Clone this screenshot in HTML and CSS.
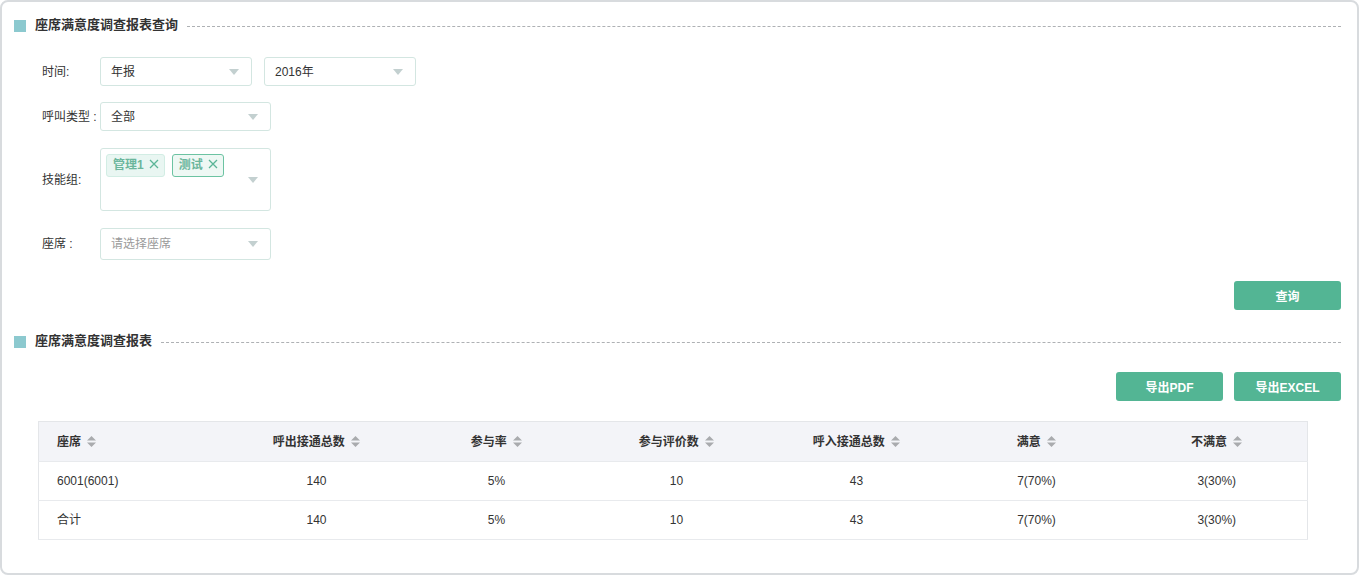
FILE: index.html
```html
<!DOCTYPE html>
<html lang="zh-CN">
<head>
  <meta charset="UTF-8" />
  <title>座席满意度调查报表查询</title>
  <link rel="stylesheet" href="styles.css">
</head>
<body>

<div class="panel">
  <div class="sec-title">
    <span class="mark"></span>
    <span class="sec-text">座席满意度调查报表查询</span>
    <span class="dash"></span>
  </div>

  <div class="form">
    <div class="row first">
      <span class="label">时间:</span>
      <div class="select w152"><span>年报</span><i class="caret"></i></div>
      <div class="select w152 ml12"><span class="num">2016年</span><i class="caret"></i></div>
    </div>
    <div class="row">
      <span class="label">呼叫类型 :</span>
      <div class="select w171"><span>全部</span><i class="caret"></i></div>
    </div>
    <div class="row">
      <span class="label">技能组:</span>
      <div class="multi w171">
        <div class="tags">
          <span class="tag">管理1
            <svg width="10" height="10" viewBox="0 0 10 10"><path d="M1 1L9 9M9 1L1 9" stroke="#5bb597" stroke-width="1.3"/></svg>
          </span>
          <span class="tag active">测试
            <svg width="10" height="10" viewBox="0 0 10 10"><path d="M1 1L9 9M9 1L1 9" stroke="#5bb597" stroke-width="1.3"/></svg>
          </span>
        </div>
        <i class="caret"></i>
      </div>
    </div>
    <div class="row last">
      <span class="label">座席 :</span>
      <div class="select w171 tall"><span class="placeholder">请选择座席</span><i class="caret"></i></div>
    </div>
  </div>

  <div class="actions first">
    <button class="btn">查询</button>
  </div>

  <div class="sec-title second">
    <span class="mark"></span>
    <span class="sec-text">座席满意度调查报表</span>
    <span class="dash"></span>
  </div>

  <div class="actions export">
    <button class="btn">导出PDF</button>
    <button class="btn">导出EXCEL</button>
  </div>

  <table class="report">
    <colgroup>
      <col style="width:188px">
      <col style="width:180px"><col style="width:180px"><col style="width:180px">
      <col style="width:180px"><col style="width:180px"><col style="width:181px">
    </colgroup>
    <thead>
      <tr>
        <th class="left">座席 <svg class="sort" width="9" height="11" viewBox="0 0 9 11"><path d="M4.5 0L9 4.5H0Z M4.5 11L0 6.5H9Z" fill="#a9abae"/></svg></th>
        <th>呼出接通总数 <svg class="sort" width="9" height="11" viewBox="0 0 9 11"><path d="M4.5 0L9 4.5H0Z M4.5 11L0 6.5H9Z" fill="#a9abae"/></svg></th>
        <th>参与率 <svg class="sort" width="9" height="11" viewBox="0 0 9 11"><path d="M4.5 0L9 4.5H0Z M4.5 11L0 6.5H9Z" fill="#a9abae"/></svg></th>
        <th>参与评价数 <svg class="sort" width="9" height="11" viewBox="0 0 9 11"><path d="M4.5 0L9 4.5H0Z M4.5 11L0 6.5H9Z" fill="#a9abae"/></svg></th>
        <th>呼入接通总数 <svg class="sort" width="9" height="11" viewBox="0 0 9 11"><path d="M4.5 0L9 4.5H0Z M4.5 11L0 6.5H9Z" fill="#a9abae"/></svg></th>
        <th>满意 <svg class="sort" width="9" height="11" viewBox="0 0 9 11"><path d="M4.5 0L9 4.5H0Z M4.5 11L0 6.5H9Z" fill="#a9abae"/></svg></th>
        <th>不满意 <svg class="sort" width="9" height="11" viewBox="0 0 9 11"><path d="M4.5 0L9 4.5H0Z M4.5 11L0 6.5H9Z" fill="#a9abae"/></svg></th>
      </tr>
    </thead>
    <tbody>
      <tr>
        <td class="left">6001(6001)</td>
        <td>140</td><td>5%</td><td>10</td><td>43</td><td>7(70%)</td><td>3(30%)</td>
      </tr>
      <tr>
        <td class="left">合计</td>
        <td>140</td><td>5%</td><td>10</td><td>43</td><td>7(70%)</td><td>3(30%)</td>
      </tr>
    </tbody>
  </table>
</div>

</body>
</html>
```

FILE: styles.css
```css
/* 基本 */
body {
  margin: 0;
  font-family: "Liberation Sans", "Noto Sans CJK SC", sans-serif;
  font-size: 12px;
  line-height: 16px;
  color: #333;
  background: #fff;
}

.panel {
  box-sizing: border-box;
  width: 1359px;
  height: 575px;
  border: 2px solid #d8dbde;
  border-radius: 8px;
  padding: 12px 16px 0 12px;
}

/* 标题 */
.sec-title {
  display: flex;
  align-items: center;
  height: 24px;
}

.sec-title.second {
  margin-top: 20px;
}

.mark {
  width: 12px;
  height: 12px;
  background: #8cc9cf;
}

.sec-text {
  margin-left: 9px;
  margin-top: -2px;
  font-size: 13px;
  font-weight: bold;
  color: #333;
}

.dash {
  flex: 1;
  margin-left: 9px;
  border-top: 1px dashed #aeb1b4;
}

/* 查询表单 */
.form {
  margin-top: 19px;
  padding-left: 28px;
}

.row {
  display: flex;
  align-items: center;
  margin-bottom: 17px;
}

.row.first {
  margin-bottom: 16px;
}

.row.last {
  margin-bottom: 0;
}

.label {
  flex: 0 0 58px;
  white-space: nowrap;
  font-size: 12px;
}

.select,
.multi {
  box-sizing: border-box;
  position: relative;
  border: 1px solid #d3e6e1;
  border-radius: 3px;
  background: #fff;
}

.select {
  display: flex;
  align-items: center;
  height: 29px;
  padding-left: 10px;
}

.select.tall {
  height: 32px;
}

.w152 { width: 152px; }
.w171 { width: 171px; }
.ml12 { margin-left: 12px; }

.placeholder {
  color: #9a9a9a;
}

.caret {
  position: absolute;
  right: 12px;
  top: 50%;
  margin-top: -3px;
  width: 0;
  height: 0;
  border-left: 5px solid transparent;
  border-right: 5px solid transparent;
  border-top: 6px solid #c3d0d0;
}

.multi {
  height: 63px;
  padding: 5px 0 0 5px;
}

.tags {
  display: flex;
  gap: 7px;
}

.tag {
  box-sizing: border-box;
  display: inline-flex;
  align-items: center;
  gap: 5px;
  height: 23px;
  padding: 0 5px 1px 6px;
  font-weight: bold;
  color: #6bb69c;
  background: #e9f6f2;
  border: 1px solid #d2ede4;
  border-radius: 3px;
}

.tag svg {
  margin-top: -2px;
}

.tag.active {
  background: #eef8f4;
  border-color: #6cc3a2;
}

/* 按钮 */
.actions {
  display: flex;
  justify-content: flex-end;
  gap: 11px;
}

.actions.first {
  margin-top: 21px;
}

.actions.export {
  margin-top: 18px;
}

.btn {
  width: 107px;
  height: 29px;
  border: none;
  border-radius: 3px;
  background: #53b594;
  color: #fff;
  font-family: "Liberation Sans", "Noto Sans CJK SC", sans-serif;
  font-size: 12px;
  font-weight: bold;
  cursor: pointer;
}

/* 报表 */
.report {
  margin: 20px 0 0 24px;
  width: 1269px;
  table-layout: fixed;
  border-collapse: collapse;
  border: 1px solid #e4e6e9;
}

.report th,
.report td {
  padding: 0;
  text-align: center;
  font-size: 12px;
  line-height: 16px;
  border-bottom: 1px solid #e8eaed;
  color: #333;
}

.report th {
  height: 39px;
  background: #f3f4f8;
  font-weight: bold;
}

.report td {
  height: 38px;
}

.report .left {
  text-align: left;
  padding-left: 18px;
}

.sort {
  vertical-align: -1px;
  margin-left: 3px;
}
```
